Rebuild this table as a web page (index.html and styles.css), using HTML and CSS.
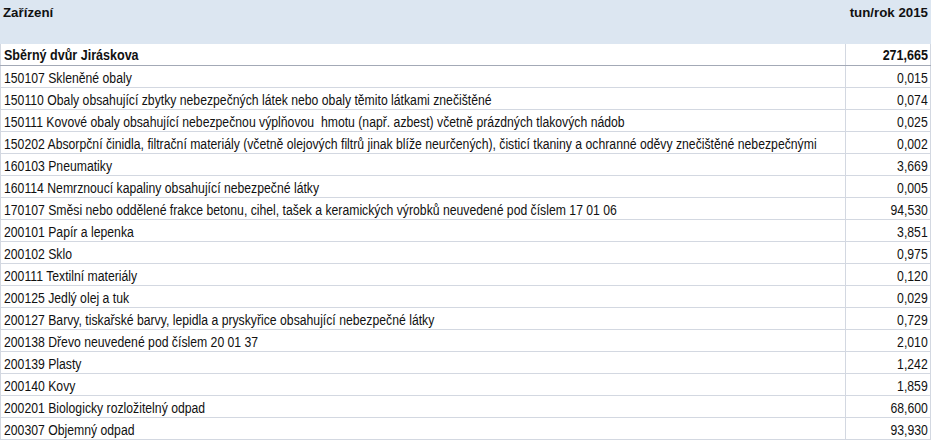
FILE: index.html
```html
<!DOCTYPE html>
<html lang="cs">
<head>
<meta charset="utf-8">
<link rel="stylesheet" href="styles.css">
</head>
<body>
<div class="sheet">
  <div class="row head"><div class="name">Zařízení</div><div class="val">tun/rok 2015</div></div>
  <div class="row total"><div class="name"><span>Sběrný dvůr Jiráskova</span></div><div class="val"><span>271,665</span></div></div>
  <div class="row"><div class="name"><span>150107 Skleněné obaly</span></div><div class="val"><span>0,015</span></div></div>
  <div class="row"><div class="name"><span>150110 Obaly obsahující zbytky nebezpečných látek nebo obaly těmito látkami znečištěné</span></div><div class="val"><span>0,074</span></div></div>
  <div class="row"><div class="name"><span>150111 Kovové obaly obsahující nebezpečnou výplňovou&nbsp; hmotu (např. azbest) včetně prázdných tlakových nádob</span></div><div class="val"><span>0,025</span></div></div>
  <div class="row"><div class="name"><span>150202 Absorpční činidla, filtrační materiály (včetně olejových filtrů jinak blíže neurčených), čisticí tkaniny a ochranné oděvy znečištěné nebezpečnými</span></div><div class="val"><span>0,002</span></div></div>
  <div class="row"><div class="name"><span>160103 Pneumatiky</span></div><div class="val"><span>3,669</span></div></div>
  <div class="row"><div class="name"><span>160114 Nemrznoucí kapaliny obsahující nebezpečné látky</span></div><div class="val"><span>0,005</span></div></div>
  <div class="row"><div class="name"><span>170107 Směsi nebo oddělené frakce betonu, cihel, tašek a keramických výrobků neuvedené pod číslem 17 01 06</span></div><div class="val"><span>94,530</span></div></div>
  <div class="row"><div class="name"><span>200101 Papír a lepenka</span></div><div class="val"><span>3,851</span></div></div>
  <div class="row"><div class="name"><span>200102 Sklo</span></div><div class="val"><span>0,975</span></div></div>
  <div class="row"><div class="name"><span>200111 Textilní materiály</span></div><div class="val"><span>0,120</span></div></div>
  <div class="row"><div class="name"><span>200125 Jedlý olej a tuk</span></div><div class="val"><span>0,029</span></div></div>
  <div class="row"><div class="name"><span>200127 Barvy, tiskařské barvy, lepidla a pryskyřice obsahující nebezpečné látky</span></div><div class="val"><span>0,729</span></div></div>
  <div class="row"><div class="name"><span>200138 Dřevo neuvedené pod číslem 20 01 37</span></div><div class="val"><span>2,010</span></div></div>
  <div class="row"><div class="name"><span>200139 Plasty</span></div><div class="val"><span>1,242</span></div></div>
  <div class="row"><div class="name"><span>200140 Kovy</span></div><div class="val"><span>1,859</span></div></div>
  <div class="row"><div class="name"><span>200201 Biologicky rozložitelný odpad</span></div><div class="val"><span>68,600</span></div></div>
  <div class="row"><div class="name"><span>200307 Objemný odpad</span></div><div class="val"><span>93,930</span></div></div>
</div>
</body>
</html>
```

FILE: styles.css
```css
html, body {
  margin: 0;
  padding: 0;
  background: #ffffff;
}
.sheet {
  width: 931px;
  font-family: "Liberation Sans", Arial, sans-serif;
  font-size: 14.67px;
  color: #111111;
}
.row {
  display: grid;
  grid-template-columns: 846px 85px;
  height: 22px;
  box-sizing: border-box;
  border-bottom: 1px solid #d3d8e1;
}
.row > div {
  box-sizing: border-box;
  white-space: nowrap;
  line-height: 20px;
  padding-top: 2px;
}
.name {
  border-left: 1px solid #d3d8e1;
  border-right: 1px solid #d3d8e1;
  padding-left: 3px;
  text-align: left;
}
.val {
  border-right: 1px solid #d3d8e1;
  padding-right: 2px;
  text-align: right;
}
.row span {
  display: inline-block;
  transform: scaleX(0.834);
  transform-origin: left center;
}
.row .val span {
  transform-origin: right center;
}
.head {
  height: 44px;
  background: #dce6f1;
  border-bottom: none;
}
.head > div {
  border: none;
  font-weight: bold;
  font-size: 13.3px;
  padding-top: 3px;
}
.head .name { padding-left: 3px; }
.head .val { padding-right: 3px; }
.total {
  border-bottom-color: #a3a9b6;
}
.total > div {
  font-weight: bold;
  padding-top: 1px;
}
.total span {
  transform: scaleX(0.856);
}
```
